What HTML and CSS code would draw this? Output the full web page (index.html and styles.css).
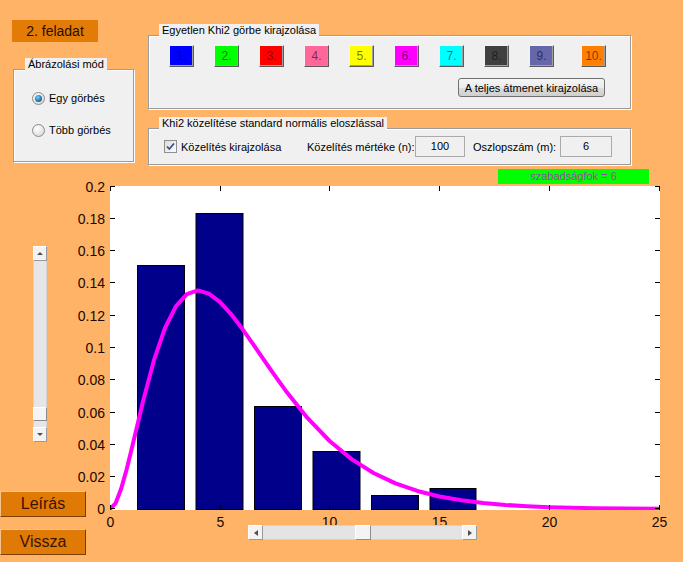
FILE: index.html
```html
<!DOCTYPE html>
<html lang="hu">
<head>
<meta charset="utf-8">
<title>2. feladat</title>
<link rel="stylesheet" href="styles.css">
</head>
<body>
<div class="app">
  <div class="top-row">
    <div class="top-left">
      <div class="task">2. feladat</div>
      <div class="panel panel-mode">
        <div class="panel-title">Ábrázolási mód</div>
        <div class="radio-row first"><span class="radio checked"></span><span>Egy görbés</span></div>
        <div class="radio-row second"><span class="radio"></span><span>Több görbés</span></div>
      </div>
    </div>
    <div class="top-right">
      <div class="panel panel-curves">
        <div class="panel-title">Egyetlen Khi2 görbe kirajzolása</div>
        <div class="swatches">
          <button class="swatch c1">1.</button>
          <button class="swatch c2">2.</button>
          <button class="swatch c3">3.</button>
          <button class="swatch c4">4.</button>
          <button class="swatch c5">5.</button>
          <button class="swatch c6">6.</button>
          <button class="swatch c7">7.</button>
          <button class="swatch c8">8.</button>
          <button class="swatch c9">9.</button>
          <button class="swatch c10">10.</button>
        </div>
        <div class="action-row"><button class="win-btn">A teljes átmenet kirajzolása</button></div>
      </div>
      <div class="panel panel-approx">
        <div class="panel-title">Khi2 közelítése standard normális eloszlással</div>
        <div class="approx-row">
          <div class="check-label">
            <span class="checkbox"><svg width="11" height="11" viewBox="0 0 11 11"><path d="M2 5.5 L4.3 8 L9 2.5" fill="none" stroke="#3b4f88" stroke-width="1.8"/></svg></span>
            <span>Közelítés kirajzolása</span>
          </div>
          <span class="field-label n-label">Közelítés mértéke (n):</span>
          <span class="field n-field">100</span>
          <span class="field-label m-label">Oszlopszám (m):</span>
          <span class="field m-field">6</span>
        </div>
      </div>
      <div class="dof">szabadságfok = 6</div>
    </div>
  </div>
  <div class="bottom-row">
    <div class="bottom-left">
      <div class="vslider">
        <div class="sb-btn v-btn"><span class="tri tri-up"></span></div>
        <div class="v-track"><div class="v-thumb"></div></div>
        <div class="sb-btn v-btn"><span class="tri tri-down"></span></div>
      </div>
      <button class="orange-btn first-btn">Leírás</button>
      <button class="orange-btn second-btn">Vissza</button>
    </div>
    <div class="plot">
      <svg class="chart" width="596" height="339" viewBox="0 0 596 339">
        <defs><clipPath id="ax"><rect x="23" y="0" width="550" height="324"/></clipPath></defs>
        <rect x="23" y="0" width="550" height="324" fill="#ffffff"/>
        <g fill="#00008a" stroke="#000000" stroke-width="1">
          <rect x="50.5" y="79.5" width="47" height="244"/>
          <rect x="109" y="27.5" width="47" height="296"/>
          <rect x="167.5" y="220.5" width="47" height="103"/>
          <rect x="226" y="265.5" width="47" height="58"/>
          <rect x="284.5" y="309.5" width="47" height="14"/>
          <rect x="343" y="302.5" width="46" height="21"/>
        </g>
        <polyline clip-path="url(#ax)" fill="none" stroke="#ff00ff" stroke-width="4" stroke-linejoin="round" stroke-linecap="round"
          points="23,323 28.49,317.43 33.98,303.35 39.47,283.98 44.96,261.78 55.94,215.72 66.92,174.47 77.9,142.26 88.88,120.3 99.86,108.14 110.84,104.43 121.82,107.57 132.8,115.86 143.78,127.8 154.76,142.09 165.74,157.64 176.72,173.65 187.7,189.47 198.68,204.68 220.64,232.17 242.6,254.99 264.56,273.09 286.52,286.97 308.48,297.35 330.44,304.96 352.4,310.44 374.36,314.33 396.32,317.06 418.28,318.96 440.24,320.27 462.2,321.17 506.12,322.18 572,322.76"/>
        <g stroke="#000000" stroke-width="1" fill="none">
          <path d="M23 322.5h5M23 290.5h5M23 258.5h5M23 226.5h5M23 193.5h5M23 161.5h5M23 129.5h5M23 96.5h5M23 64.5h5M23 32.5h5M23 0.5h5"/>
          <path d="M573 322.5h-5M573 290.5h-5M573 258.5h-5M573 226.5h-5M573 193.5h-5M573 161.5h-5M573 129.5h-5M573 96.5h-5M573 64.5h-5M573 32.5h-5M573 0.5h-5"/>
          <path d="M23.5 324v-5M133.5 324v-5M242.5 324v-5M352.5 324v-5M462.5 324v-5M572.5 324v-5"/>
          <path d="M23.5 0v5M133.5 0v5M242.5 0v5M352.5 0v5M462.5 0v5M572.5 0v5"/>
        </g>
        <g class="tick-labels" text-anchor="end">
          <text x="18" y="328">0</text>
          <text x="18" y="296">0.02</text>
          <text x="18" y="264">0.04</text>
          <text x="18" y="232">0.06</text>
          <text x="18" y="199">0.08</text>
          <text x="18" y="167">0.1</text>
          <text x="18" y="135">0.12</text>
          <text x="18" y="102">0.14</text>
          <text x="18" y="70">0.16</text>
          <text x="18" y="38">0.18</text>
          <text x="18" y="6">0.2</text>
        </g>
        <g class="tick-labels" text-anchor="middle">
          <text x="23.5" y="341">0</text>
          <text x="133.5" y="341">5</text>
          <text x="242.5" y="341">10</text>
          <text x="352.5" y="341">15</text>
          <text x="462.5" y="341">20</text>
          <text x="572.5" y="341">25</text>
        </g>
      </svg>
      <div class="hslider">
        <div class="sb-btn h-btn"><span class="tri tri-left"></span></div>
        <div class="h-track"><div class="h-thumb"></div></div>
        <div class="sb-btn h-btn"><span class="tri tri-right"></span></div>
      </div>
    </div>
  </div>
</div>
</body>
</html>
```

FILE: styles.css
```css
html, body {
  margin: 0;
  padding: 0;
}

body {
  background: #ffb366;
  font-family: "Liberation Sans", Arial, sans-serif;
  font-size: 11px;
  color: #000;
  width: 683px;
  height: 562px;
  overflow: hidden;
}

button {
  font-family: "Liberation Sans", Arial, sans-serif;
  padding: 0;
  margin: 0;
  cursor: default;
}

.app {
  display: flex;
  flex-direction: column;
  width: 683px;
  height: 562px;
}

/* ---------- top row ---------- */
.top-row {
  display: flex;
  height: 186px;
  flex: none;
}

.top-left {
  width: 148px;
  flex: none;
}

.task {
  margin: 20px 0 0 12px;
  width: 86px;
  height: 22px;
  background: #e27c06;
  color: #2b0d00;
  font-size: 14px;
  line-height: 22px;
  text-align: center;
}

.panel {
  box-sizing: border-box;
  background: #f0f0f0;
  border: 1px solid #9c9c9c;
  box-shadow: inset 1px 1px 0 #ffffff, 1px 1px 0 #ffffff;
}

.panel-title {
  width: max-content;
  height: 13px;
  line-height: 13px;
  margin-top: -12px;
  padding: 0 3px;
  background: #f0f0f0;
}

.panel-mode {
  margin: 27px 0 0 13px;
  width: 121px;
  height: 93px;
}

.panel-mode .panel-title {
  margin-left: 11px;
}

.radio-row {
  display: flex;
  align-items: center;
  height: 16px;
  padding-left: 18px;
}

.radio-row.first {
  margin-top: 19px;
}

.radio-row.second {
  margin-top: 16px;
}

.radio {
  box-sizing: border-box;
  width: 13px;
  height: 13px;
  border-radius: 50%;
  margin-right: 4px;
  border: 1px solid #8c8c8c;
  background: radial-gradient(circle at 40% 35%, #ffffff 0%, #e6e6e6 55%, #cfcfcf 100%);
  display: flex;
  align-items: center;
  justify-content: center;
}

.radio.checked::after {
  content: "";
  width: 7px;
  height: 7px;
  border-radius: 50%;
  background: radial-gradient(circle at 40% 35%, #7cd0f5 0%, #2a7fb8 50%, #123f66 100%);
}

.top-right {
  display: flex;
  flex-direction: column;
}

.panel-curves {
  margin-top: 35px;
  width: 483px;
  height: 74px;
}

.panel-curves .panel-title,
.panel-approx .panel-title {
  margin-left: 10px;
}

.swatches {
  display: flex;
  gap: 20px;
  margin: 8px 0 0 20px;
}

.swatch {
  box-sizing: border-box;
  width: 25px;
  height: 22px;
  font-size: 12px;
  color: rgba(0, 0, 0, 0.55);
  border: 1px solid;
  border-color: #f4f4f4 #5a5a5a #5a5a5a #f4f4f4;
  box-shadow: inset -1px -1px 0 #a0a0a0;
}

.c1 { background: #0000ff; }
.c2 { background: #00ff00; }
.c3 { background: #ff0000; }
.c4 { background: #ff6699; }
.c5 { background: #ffff00; }
.c6 { background: #ff00ff; }
.c7 { background: #00ffff; }
.c8 { background: #404040; }
.c9 { background: #6666aa; }
.c10 { background: #ff8000; margin-left: 7px; }

.action-row {
  display: flex;
  justify-content: flex-end;
  margin: 11px 25px 0 0;
}

.win-btn {
  box-sizing: border-box;
  width: 147px;
  height: 19px;
  font-size: 11px;
  color: #000;
  border: 1px solid #707070;
  border-radius: 3px;
  background: linear-gradient(#f6f6f6 0%, #ebebeb 50%, #dddddd 51%, #cfcfcf 100%);
}

.panel-approx {
  margin-top: 19px;
  width: 483px;
  height: 37px;
}

.approx-row {
  display: flex;
  align-items: center;
  margin-top: 6px;
  height: 21px;
}

.check-label {
  display: flex;
  align-items: center;
  margin-left: 15px;
  width: 143px;
}

.checkbox {
  box-sizing: border-box;
  width: 13px;
  height: 13px;
  margin-right: 4px;
  border: 1px solid #8e8f8f;
  background: linear-gradient(135deg, #dcdcdc, #fbfbfb);
  display: flex;
  align-items: center;
  justify-content: center;
}

.checkbox svg {
  display: block;
}

.n-label {
  width: 108px;
}

.m-label {
  margin-left: 8px;
  width: 87px;
}

.field {
  box-sizing: border-box;
  height: 21px;
  line-height: 19px;
  text-align: center;
  border: 1px solid #ababab;
  background: #f0f0f0;
}

.n-field {
  width: 50px;
}

.m-field {
  width: 52px;
}

.dof {
  margin: 4px 0 0 350px;
  width: 151px;
  height: 15px;
  line-height: 15px;
  background: #00ff00;
  color: #8e4fa6;
  text-align: center;
  font-size: 11px;
}

/* ---------- bottom row ---------- */
.bottom-row {
  display: flex;
  flex: 1;
}

.bottom-left {
  width: 87px;
  flex: none;
  display: flex;
  flex-direction: column;
}

.vslider {
  margin: 60px 0 0 33px;
  width: 14px;
  height: 196px;
  display: flex;
  flex-direction: column;
  background: #e6e6e6;
  box-shadow: inset 0 0 0 1px #d4d4d4;
}

.sb-btn {
  box-sizing: border-box;
  display: flex;
  align-items: center;
  justify-content: center;
  background: #f3f3f3;
  border: 1px solid;
  border-color: #ffffff #9a9a9a #9a9a9a #ffffff;
}

.v-btn {
  height: 15px;
}

.v-track {
  flex: 1;
}

.v-thumb {
  box-sizing: border-box;
  margin-top: 146px;
  height: 14px;
  background: #f4f4f4;
  border: 1px solid;
  border-color: #ffffff #8c8c8c #8c8c8c #ffffff;
}

.tri {
  width: 0;
  height: 0;
  border-style: solid;
}

.tri-up {
  border-width: 0 3px 3px 3px;
  border-color: transparent transparent #505050 transparent;
}

.tri-down {
  border-width: 3px 3px 0 3px;
  border-color: #505050 transparent transparent transparent;
}

.tri-left {
  border-width: 3.5px 4px 3.5px 0;
  border-color: transparent #505050 transparent transparent;
}

.tri-right {
  border-width: 3.5px 0 3.5px 4px;
  border-color: transparent transparent transparent #505050;
}

.orange-btn {
  box-sizing: border-box;
  width: 86px;
  height: 26px;
  font-size: 16px;
  color: #3a1300;
  background: #e07a07;
  border: 1px solid;
  border-color: #f7c48c #7a3f00 #7a3f00 #f7c48c;
}

.first-btn {
  margin-top: 49px;
}

.second-btn {
  margin-top: 12px;
}

.plot {
  flex: 1;
  display: flex;
  flex-direction: column;
}

.chart {
  display: block;
  overflow: visible;
}

.tick-labels {
  font-family: "Liberation Sans", Arial, sans-serif;
  font-size: 14px;
  fill: #1c0800;
}

.hslider {
  position: relative;
  margin-left: 161px;
  width: 229px;
  height: 15px;
  display: flex;
  background: #e4e4e4;
  box-shadow: inset 0 0 0 1px #d0d0d0;
}

.h-btn {
  width: 15px;
}

.h-track {
  flex: 1;
  display: flex;
}

.h-thumb {
  box-sizing: border-box;
  margin-left: 92px;
  width: 16px;
  background: #f4f4f4;
  border: 1px solid;
  border-color: #ffffff #8c8c8c #8c8c8c #ffffff;
}
```
